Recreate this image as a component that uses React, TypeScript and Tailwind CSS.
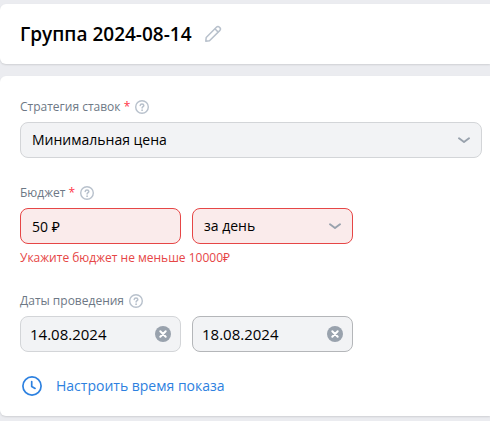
import { useState } from 'react';
import type { ReactNode } from 'react';

const HelpIcon = () => (
  <svg className="size-[14px] shrink-0" viewBox="0 0 14 14" fill="none" stroke="#b8c1cc">
    <circle cx="7" cy="7" r="6.3" strokeWidth="1.4" />
    <path
      d="M5.2 5.5c.1-1 .8-1.6 1.8-1.6s1.8.6 1.8 1.5c0 1.3-1.7 1.3-1.7 2.7"
      strokeWidth="1.5"
      strokeLinecap="round"
    />
    <circle cx="7.1" cy="10.2" r=".9" fill="#b8c1cc" stroke="none" />
  </svg>
);

const PencilIcon = () => (
  <svg
    className="size-[18px]"
    viewBox="0 0 18 18"
    fill="none"
    stroke="#b8c1cc"
    strokeWidth="1.5"
    strokeLinejoin="round"
  >
    <path d="M1.8 16.2l.4-3.7L12.4 2.3c.9-.9 2.2-.9 3-.1l.4.4c.8.8.8 2.1-.1 3L5.5 15.8l-3.7.4z" />
    <path d="M10.9 3.8l3.3 3.3" />
  </svg>
);

const Chevron = () => (
  <svg
    className="pointer-events-none absolute right-3 top-1/2 h-2 w-3 -translate-y-1/2"
    viewBox="0 0 12 8"
    fill="none"
    stroke="#99a2ad"
    strokeWidth="1.9"
    strokeLinecap="round"
    strokeLinejoin="round"
  >
    <path d="M1 2.3l5 3.7 5-3.7" />
  </svg>
);

const ClearIcon = () => (
  <svg className="size-4" viewBox="0 0 16 16">
    <circle cx="8" cy="8" r="8" fill="#99a2ad" />
    <path d="M5.3 5.3l5.4 5.4M10.7 5.3l-5.4 5.4" stroke="#fff" strokeWidth="2" strokeLinecap="round" />
  </svg>
);

const ClockIcon = () => (
  <svg
    className="size-5"
    viewBox="0 0 20 20"
    fill="none"
    stroke="#2d81e0"
    strokeWidth="1.7"
    strokeLinecap="round"
    strokeLinejoin="round"
  >
    <circle cx="10" cy="10" r="9.1" />
    <path d="M9.7 5.5v5l3.4 1.9" />
  </svg>
);

interface FieldLabelProps {
  htmlFor: string;
  required?: boolean;
  children: ReactNode;
}

const FieldLabel = ({ htmlFor, required, children }: FieldLabelProps) => (
  <div className="mb-[5px] flex h-5 items-center gap-[5px]">
    <label htmlFor={htmlFor} className="text-xs leading-5 text-[#6d7885]">
      {children}
      {required && <span className="text-[#ff3347]"> *</span>}
    </label>
    <HelpIcon />
  </div>
);

interface DateFieldProps {
  id: string;
  label: string;
  initial: string;
  className: string;
}

const DateField = ({ id, label, initial, className }: DateFieldProps) => {
  const [value, setValue] = useState(initial);

  return (
    <div className={`flex h-9 w-[161px] items-center rounded-lg border bg-[#f2f3f5] px-[9px] ${className}`}>
      <input
        id={id}
        aria-label={label}
        value={value}
        onChange={(e) => setValue(e.target.value)}
        className="min-w-0 flex-1 bg-transparent text-[15px] leading-5 text-black outline-none"
      />
      <button type="button" aria-label="Очистить" onClick={() => setValue('')}>
        <ClearIcon />
      </button>
    </div>
  );
};

export default function App() {
  const [budget, setBudget] = useState('50 ₽');

  return (
    <div className="min-h-screen bg-[#ebecf0] pt-1 font-['Open_Sans','Noto_Sans',sans-serif] text-black">
      {/* Group title */}
      <header className="mb-3 flex h-15 items-center gap-3 rounded-l-md bg-white px-5 shadow-[0_1px_2px_rgba(0,0,0,0.12)]">
        <h1 className="text-[19px] leading-6 font-semibold">Группа 2024-08-14</h1>
        <button type="button" aria-label="Переименовать">
          <PencilIcon />
        </button>
      </header>

      <main className="rounded-l-md bg-white pt-[21px] pr-2 pb-[18px] pl-5 shadow-[0_1px_2px_rgba(0,0,0,0.12)]">
        {/* Bid strategy */}
        <section className="mb-[25px]">
          <FieldLabel htmlFor="strategy" required>
            Стратегия ставок
          </FieldLabel>
          <div className="relative">
            <select
              id="strategy"
              className="h-9 w-full appearance-none rounded-lg border border-[#d3d5d8] bg-[#f2f3f5] pr-8 pl-[11px] text-sm"
            >
              <option>Минимальная цена</option>
            </select>
            <Chevron />
          </div>
        </section>

        {/* Budget */}
        <section className="mb-[23px]">
          <FieldLabel htmlFor="budget" required>
            Бюджет
          </FieldLabel>
          <div className="flex gap-[11px]">
            <input
              id="budget"
              value={budget}
              onChange={(e) => setBudget(e.target.value)}
              aria-invalid="true"
              aria-describedby="budget-error"
              className="h-9 w-[161px] rounded-lg border border-[#e64646] bg-[#faebeb] px-[11px] text-sm outline-none"
            />
            <div className="relative w-[161px]">
              <select
                aria-label="Период бюджета"
                className="h-9 w-full appearance-none rounded-lg border border-[#e64646] bg-[#faebeb] pr-8 pl-[11px] text-sm"
              >
                <option>за день</option>
              </select>
              <Chevron />
            </div>
          </div>
          <p id="budget-error" className="mt-1 text-xs leading-5 text-[#e64646]">
            Укажите бюджет не меньше 10000₽
          </p>
        </section>

        {/* Dates */}
        <section className="mb-[22px]">
          <FieldLabel htmlFor="date-from">Даты проведения</FieldLabel>
          <div className="flex gap-[11px]">
            <DateField id="date-from" label="Дата начала" initial="14.08.2024" className="border-[#d3d5d8]" />
            <DateField id="date-to" label="Дата окончания" initial="18.08.2024" className="border-[#b4b6b9]" />
          </div>
        </section>

        <button type="button" className="flex h-6 items-center gap-3.5 pl-0.5 text-sm text-[#2d81e0]">
          <ClockIcon />
          Настроить время показа
        </button>
      </main>
    </div>
  );
}
